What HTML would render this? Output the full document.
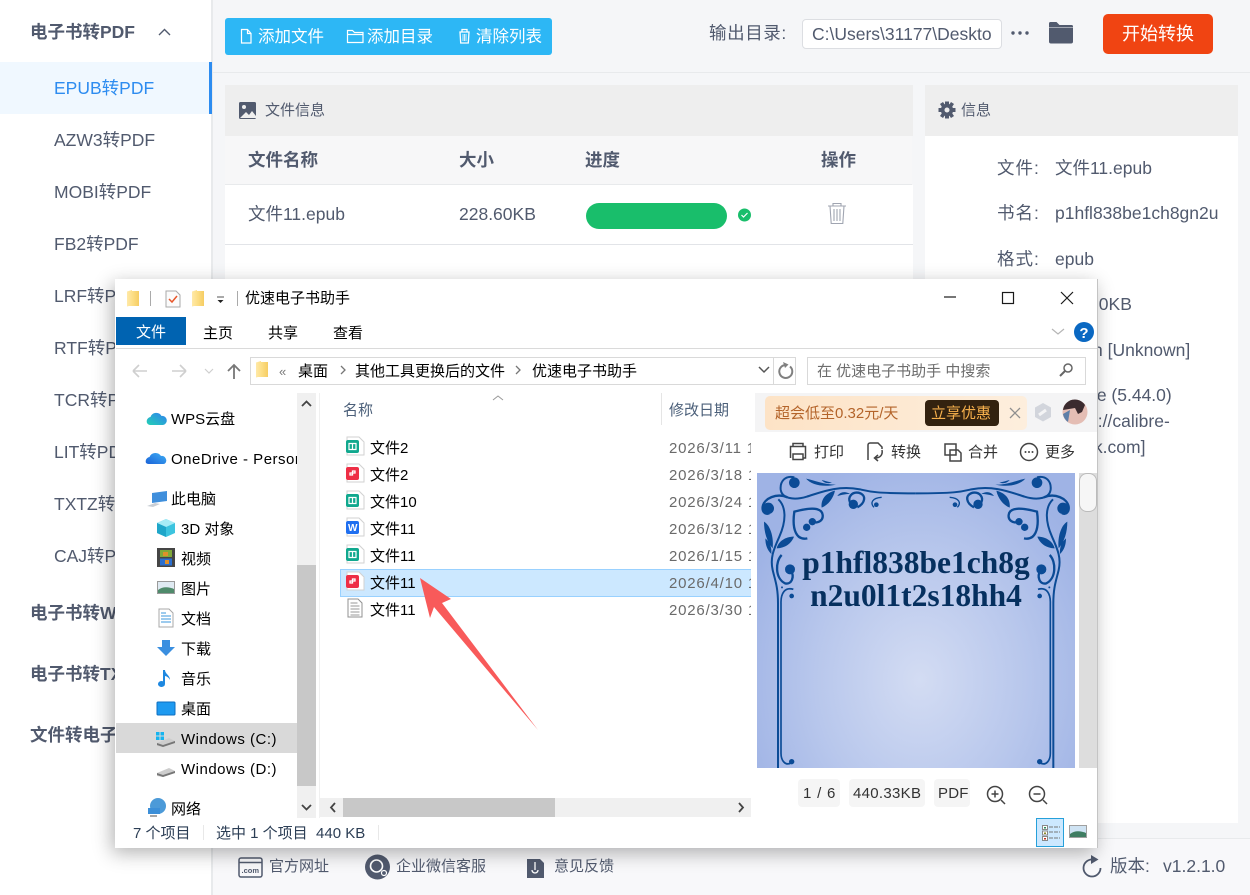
<!DOCTYPE html>
<html lang="zh"><head><meta charset="utf-8"><title>优速电子书助手</title>
<style>
html,body{margin:0;padding:0;width:1250px;height:895px;overflow:hidden;background:#f5f6f8}
body{position:relative;font-family:"Liberation Sans","Noto Sans CJK SC",sans-serif;color:#515a6e}
.a{position:absolute}
.t{position:absolute;white-space:nowrap;line-height:20px;font-size:17.5px}
.b{font-weight:700}
.w .t{font-size:15px;color:#000}
.w .t.d{color:#6a6a6a;letter-spacing:.8px}
.n{letter-spacing:.5px}
svg{position:absolute;left:0;top:0;overflow:visible}
</style></head><body>
<!-- sidebar -->
<div class="a" style="left:0;top:0;width:211px;height:895px;background:#fff"></div>
<div class="a" style="left:211px;top:0;width:2px;height:895px;background:#e8eaec"></div>
<div class="a" style="left:0;top:62px;width:209px;height:52px;background:#f0f8ff"></div>
<div class="a" style="left:209px;top:62px;width:3px;height:52px;background:#2d8cf0"></div>
<div class="t b" style="left:30px;top:22px">电子书转PDF</div>
<div class="t" style="left:54px;top:78px;color:#2d8cf0">EPUB转PDF</div>
<div class="t" style="left:54px;top:130px">AZW3转PDF</div>
<div class="t" style="left:54px;top:182px">MOBI转PDF</div>
<div class="t" style="left:54px;top:234px">FB2转PDF</div>
<div class="t" style="left:54px;top:286px">LRF转PDF</div>
<div class="t" style="left:54px;top:338px">RTF转PDF</div>
<div class="t" style="left:54px;top:390px">TCR转PDF</div>
<div class="t" style="left:54px;top:442px">LIT转PDF</div>
<div class="t" style="left:54px;top:494px">TXTZ转PDF</div>
<div class="t" style="left:54px;top:546px">CAJ转PDF</div>
<div class="t b" style="left:30px;top:603px">电子书转WORD</div>
<div class="t b" style="left:30px;top:664px">电子书转TXT</div>
<div class="t b" style="left:30px;top:725px">文件转电子书</div>

<!-- top bar -->
<div class="a" style="left:213px;top:72px;width:1037px;height:1px;background:#e8eaec"></div>
<div class="a" style="left:225px;top:18px;width:327px;height:37px;background:#2db7f5;border-radius:3px"></div>
<div class="t" style="left:258px;top:27px;color:#fff;font-size:16.5px">添加文件</div>
<div class="t" style="left:367px;top:27px;color:#fff;font-size:16.5px">添加目录</div>
<div class="t" style="left:476px;top:27px;color:#fff;font-size:16.5px">清除列表</div>
<div class="t" style="left:709px;top:23px;letter-spacing:.6px">输出目录:</div>
<div class="a" style="left:802px;top:19px;width:198px;height:28px;background:#fff;border:1px solid #dcdee2;border-radius:4px"></div>
<div class="t" style="left:812px;top:24px;font-size:17.5px;width:180px;overflow:hidden">C:\Users\31177\Desktop</div>
<div class="a" style="left:1103px;top:14px;width:110px;height:40px;background:#f04412;border-radius:5px"></div>
<div class="t" style="left:1122px;top:24px;color:#fff;font-size:18px">开始转换</div>

<!-- file panel -->
<div class="a" style="left:225px;top:85px;width:688px;height:51px;background:#eee"></div>
<div class="a" style="left:225px;top:136px;width:687px;height:48px;background:#f7f7f8"></div>
<div class="a" style="left:225px;top:184px;width:687px;height:1px;background:#e8eaec"></div>
<div class="a" style="left:225px;top:185px;width:688px;height:638px;background:#fff"></div>
<div class="a" style="left:225px;top:244px;width:688px;height:1px;background:#e2e4e8"></div>
<div class="t" style="left:265px;top:101px;font-size:15px">文件信息</div>
<div class="t b" style="left:248px;top:150px">文件名称</div>
<div class="t b" style="left:459px;top:150px">大小</div>
<div class="t b" style="left:585px;top:150px">进度</div>
<div class="t b" style="left:821px;top:150px">操作</div>
<div class="t" style="left:248px;top:204px">文件11.epub</div>
<div class="t" style="left:459px;top:204px">228.60KB</div>
<div class="a" style="left:586px;top:203px;width:141px;height:26px;background:#19be6b;border-radius:13px"></div>

<!-- info panel -->
<div class="a" style="left:925px;top:85px;width:313px;height:51px;background:#eee"></div>
<div class="a" style="left:925px;top:136px;width:313px;height:687px;background:#fff"></div>
<div class="t" style="left:961px;top:101px;font-size:15px">信息</div>
<div class="t" style="left:997px;top:158px;letter-spacing:1px">文件:</div><div class="t" style="left:1055px;top:158px">文件11.epub</div>
<div class="t" style="left:997px;top:203px;letter-spacing:1px">书名:</div><div class="t" style="left:1055px;top:203px;width:163px;overflow:hidden">p1hfl838be1ch8gn2u0l1t2s18hh4</div>
<div class="t" style="left:997px;top:249px;letter-spacing:1px">格式:</div><div class="t" style="left:1055px;top:249px">epub</div>
<div class="t" style="left:997px;top:294px;letter-spacing:1px">大小:</div><div class="t" style="left:1055px;top:294px">228.60KB</div>
<div class="t" style="left:1093px;top:340px">n [Unknown]</div>
<div class="t" style="left:1055px;top:385px">calibre (5.44.0)</div>
<div class="t" style="left:1055px;top:411px">[https://calibre-</div>
<div class="t" style="left:1055px;top:437px">ebook.com]</div>

<!-- footer -->
<div class="a" style="left:213px;top:838px;width:1037px;height:57px;background:#f8f8fa;border-top:1px solid #e8eaec;box-sizing:border-box"></div>
<div class="t" style="left:269px;top:857px;font-size:15px">官方网址</div>
<div class="t" style="left:396px;top:857px;font-size:15px">企业微信客服</div>
<div class="t" style="left:554px;top:857px;font-size:15px">意见反馈</div>
<div class="t" style="left:1110px;top:856px">版本:</div>
<div class="t" style="left:1163px;top:856px">v1.2.1.0</div>

<!-- background icons -->
<svg width="1250" height="895" viewBox="0 0 1250 895">
<path d="M159 35l5.500-5.500 5.500 5.500" fill="none" stroke="#515a6e" stroke-width="1.400"/>
<g fill="none" stroke="#fff" stroke-width="1.200">
<path d="M241.500 29.500h6l3.500 4v9.500h-9.500zM247.500 29.500v4h3.500"/>
<path d="M347.500 30.500h5l2 2h8.500v10h-15.500zM347.500 34.500h15.500"/>
</g>
<path d="M460 32h9l-.7 11h-7.600zM462 29.500h5v2.500h-5z" fill="none" stroke="#fff" stroke-width="1.300"/>
<path d="M463 34v7M464.500 34v7M466 34v7" stroke="#fff" stroke-width=".8"/>
<g fill="#515a6e"><circle cx="1013" cy="33" r="1.700"/><circle cx="1020" cy="33" r="1.700"/><circle cx="1027" cy="33" r="1.700"/>
<path d="M1049 23.500a1.500 1.500 0 0 1 1.500-1.500h6l3 3h12a1.500 1.500 0 0 1 1.500 1.500v1h-24z"/><path d="M1049 28h24v13.500a2 2 0 0 1-2 2h-20a2 2 0 0 1-2-2z"/></g>
<g><rect x="239" y="102" width="17" height="17" rx="1.500" fill="#515a6e"/><circle cx="244" cy="107" r="2" fill="#eee"/><path d="M240 118l6-6 3 3 3-4 4 5v2h-16z" fill="#eee"/></g>
<g fill="#515a6e"><circle cx="947" cy="110" r="6.200"/><circle cx="947" cy="110" r="2.500" fill="#eee"/>
<path d="M945 101.500h4v3h-4zM945 115.500h4v3h-4zM938.500 108h3v4h-3zM952.500 108h3v4h-3z"/><path d="M940 104l3-2 2 3-3 2zM951 102l3 2-2 3-3-2zM940 116l3 2 2-3-3-2zM954 116l-3 2-2-3 3-2z"/></g>
<circle cx="744.500" cy="215" r="6.500" fill="#19be6b"/><path d="M741.500 215l2 2 4-4" fill="none" stroke="#fff" stroke-width="1.200"/>
<g fill="none" stroke="#a0a5b1" stroke-width="1.100"><path d="M828 206h18M833 206v-2.500h8v2.500M830 206l1.200 17.500h11.600l1.200-17.500M834 209v12M837 209v12M840 209v12"/></g>
<g fill="none" stroke="#515a6e" stroke-width="1.500"><path d="M239 860a2 2 0 0 1 2-2h19a2 2 0 0 1 2 2v15a2 2 0 0 1-2 2h-19a2 2 0 0 1-2-2zM239 862.500h23"/></g>
<text x="241.500" y="873" font-size="7.500" font-weight="700" fill="#515a6e" font-family="Liberation Sans">.com</text>
<circle cx="377.500" cy="867" r="12.500" fill="#515a6e"/><circle cx="376.500" cy="866" r="6" fill="none" stroke="#fff" stroke-width="1.600"/><circle cx="384" cy="873" r="2.500" fill="none" stroke="#fff" stroke-width="1.200"/>
<path d="M527 859h13l4 4v15h-17z" fill="#515a6e"/><path d="M535 862v8M532 870a3 3 0 1 0 6 0" fill="none" stroke="#fff" stroke-width="1.300"/>
<path d="M1092 859.500A8.500 8.500 0 1 0 1100.500 868" fill="none" stroke="#515a6e" stroke-width="1.800"/><path d="M1091 855l7.500 4.500-7.500 4.500z" fill="#515a6e"/>
</svg>

<!-- explorer window -->
<div class="a w" style="left:115px;top:279px;width:983px;height:569px;background:#fff;box-shadow:-3px 5px 18px rgba(0,0,0,.3)">
</div>
<div class="a" style="left:1097px;top:279px;width:1px;height:569px;background:#c4c4c4"></div>
<div class="w">
<div class="t" style="left:245px;top:289px">优速电子书助手</div>
<div class="a" style="left:116px;top:317px;width:70px;height:28px;background:#0063b1"></div>
<div class="t" style="left:136px;top:323px;color:#fff">文件</div>
<div class="t" style="left:203px;top:324px">主页</div>
<div class="t" style="left:268px;top:324px">共享</div>
<div class="t" style="left:333px;top:324px">查看</div>
<div class="a" style="left:116px;top:348px;width:981px;height:1px;background:#dadada"></div>
<div class="a" style="left:250px;top:357px;width:544px;height:26px;border:1px solid #d9d9d9"></div>
<div class="a" style="left:773px;top:357px;width:1px;height:27px;background:#d9d9d9"></div>
<div class="a" style="left:807px;top:357px;width:277px;height:26px;border:1px solid #d9d9d9"></div>
<div class="t" style="left:279px;top:362px;color:#777;font-size:13px">«</div>
<div class="t" style="left:298px;top:362px">桌面</div>
<div class="t" style="left:355px;top:362px">其他工具更换后的文件</div>
<div class="t" style="left:532px;top:362px">优速电子书助手</div>
<div class="t" style="left:817px;top:362px;color:#6d6d6d">在 优速电子书助手 中搜索</div>

<!-- nav pane -->
<div class="a" style="left:116px;top:723px;width:181px;height:30px;background:#d9d9d9"></div>
<div class="a" style="left:297px;top:393px;width:19px;height:425px;background:#f0f0f0"></div>
<div class="a" style="left:297px;top:565px;width:19px;height:221px;background:#c8c8c8"></div>
<div class="t" style="left:171px;top:410px">WPS云盘</div>
<div class="t n" style="left:171px;top:450px;width:126px;overflow:hidden">OneDrive - Personal</div>
<div class="t" style="left:171px;top:490px">此电脑</div>
<div class="t" style="left:181px;top:520px">3D 对象</div>
<div class="t" style="left:181px;top:550px">视频</div>
<div class="t" style="left:181px;top:580px">图片</div>
<div class="t" style="left:181px;top:610px">文档</div>
<div class="t" style="left:181px;top:640px">下载</div>
<div class="t" style="left:181px;top:670px">音乐</div>
<div class="t" style="left:181px;top:700px">桌面</div>
<div class="t n" style="left:181px;top:730px">Windows (C:)</div>
<div class="t n" style="left:181px;top:760px">Windows (D:)</div>
<div class="t" style="left:171px;top:800px">网络</div>

<!-- list -->
<div class="a" style="left:319px;top:393px;width:1px;height:425px;background:#f0f0f0"></div>
<div class="t" style="left:343px;top:401px;color:#4c607a">名称</div>
<div class="a" style="left:661px;top:393px;width:1px;height:32px;background:#e5e5e5"></div>
<div class="t" style="left:669px;top:401px;color:#4c607a">修改日期</div>
<div class="a" style="left:340px;top:569px;width:410px;height:26px;background:#cce8ff;border:1px solid #99d1ff;border-right:0"></div>
<div class="t" style="left:370px;top:439px">文件2</div><div class="t d" style="left:669px;top:439px;width:82px;overflow:hidden">2026/3/11 11:20</div>
<div class="t" style="left:370px;top:466px">文件2</div><div class="t d" style="left:669px;top:466px;width:82px;overflow:hidden">2026/3/18 11:20</div>
<div class="t" style="left:370px;top:493px">文件10</div><div class="t d" style="left:669px;top:493px;width:82px;overflow:hidden">2026/3/24 11:20</div>
<div class="t" style="left:370px;top:520px">文件11</div><div class="t d" style="left:669px;top:520px;width:82px;overflow:hidden">2026/3/12 11:20</div>
<div class="t" style="left:370px;top:547px">文件11</div><div class="t d" style="left:669px;top:547px;width:82px;overflow:hidden">2026/1/15 11:20</div>
<div class="t" style="left:370px;top:574px">文件11</div><div class="t d" style="left:669px;top:574px;width:82px;overflow:hidden">2026/4/10 11:20</div>
<div class="t" style="left:370px;top:601px">文件11</div><div class="t d" style="left:669px;top:601px;width:82px;overflow:hidden">2026/3/30 11:20</div>
<div class="a" style="left:320px;top:798px;width:431px;height:19px;background:#f0f0f0"></div>
<div class="a" style="left:343px;top:798px;width:212px;height:19px;background:#c8c8c8"></div>

<!-- status -->
<div class="t" style="left:133px;top:824px;color:#2c3e55">7 个项目</div>
<div class="a" style="left:203px;top:825px;width:1px;height:15px;background:#e8e8e8"></div>
<div class="t" style="left:216px;top:824px;color:#2c3e55">选中 1 个项目&nbsp; 440 KB</div>
<div class="a" style="left:378px;top:825px;width:1px;height:15px;background:#e8e8e8"></div>
<div class="a" style="left:1036px;top:818px;width:26px;height:27px;background:#cce8ff;border:1px solid #26a0da"></div>

<!-- preview -->
<div class="a" style="left:755px;top:393px;width:342px;height:39px;background:#f4f4f5"></div>
<div class="a" style="left:765px;top:396px;width:262px;height:34px;background:linear-gradient(90deg,#fde3c6,#fdeedd);border-radius:5px"></div>
<div class="t" style="left:775px;top:404px;color:#b4642a">超会低至0.32元/天</div>
<div class="a" style="left:925px;top:400px;width:74px;height:26px;background:#33220f;border-radius:4px"></div>
<div class="t" style="left:931px;top:404px;color:#f6b04c">立享优惠</div>
<div class="t" style="left:814px;top:443px;color:#333">打印</div>
<div class="t" style="left:891px;top:443px;color:#333">转换</div>
<div class="t" style="left:968px;top:443px;color:#333">合并</div>
<div class="t" style="left:1045px;top:443px;color:#333">更多</div>
<div class="a" style="left:757px;top:473px;width:318px;height:295px;background:radial-gradient(ellipse 190px 230px at 163px 207px,#d3dcf3 0%,#b8c7ec 55%,#9fb3e5 100%);overflow:hidden">
<svg style="left:-7px;top:-3px" width="350" height="310" viewBox="0 0 1050 930">
<defs><g id="orn" fill="none" stroke="#0b4b96" stroke-width="7">
<path d="M133 22C105 15 90 35 92 58 95 85 130 92 170 80 210 68 260 45 330 58 360 65 375 70 497 70" stroke-width="6"/>
<circle cx="133" cy="38" r="16" fill="#0b4b96" stroke="none"/>
<path d="M168 26C190 30 225 45 258 44 222 52 185 46 168 26ZM215 30C225 32 235 36 246 38 232 42 222 38 215 30ZM215 113C212 90 225 70 255 62 250 85 235 105 215 113ZM262 78C270 66 285 62 300 72 285 72 275 75 262 78Z" fill="#0b4b96" stroke="none"/>
<path d="M322 112C345 100 352 75 325 68 305 65 293 82 300 97"/>
<circle cx="310" cy="103" r="14" fill="#0b4b96" stroke="none"/>
<path d="M372 112C360 100 365 84 395 82" stroke-width="4"/><circle cx="379" cy="104" r="7" fill="#0b4b96" stroke="none"/>
<path d="M112 82C80 68 42 85 38 110 36 125 45 135 58 130"/>
<circle cx="55" cy="115" r="17" fill="#0b4b96" stroke="none"/>
<path d="M85 88C108 110 110 150 88 200 70 240 60 265 68 300 75 330 84 350 84 400L84 930" stroke-width="6"/>
<path d="M172 205C140 212 125 180 133 125 170 115 215 108 218 135 220 150 205 162 190 155"/>
<circle cx="187" cy="155" r="11" fill="#0b4b96" stroke="none"/><circle cx="170" cy="172" r="11" fill="#0b4b96" stroke="none"/>
<path d="M80 235C85 215 105 200 132 200 125 220 105 235 80 235ZM42 155C60 165 72 200 68 235 50 215 42 185 42 155ZM46 205C58 215 66 230 64 252 52 240 46 225 46 205Z" fill="#0b4b96" stroke="none"/>
<path d="M95 255C75 275 75 325 105 340 125 345 135 320 122 300"/>
<circle cx="120" cy="298" r="15" fill="#0b4b96" stroke="none"/>
<path d="M130 358C105 350 92 370 93 400L93 850C93 870 105 890 125 878" stroke-width="5"/>
<circle cx="125" cy="378" r="7" fill="#0b4b96" stroke="none"/><circle cx="125" cy="875" r="8" fill="#0b4b96" stroke="none"/><circle cx="96" cy="352" r="3" fill="#0b4b96" stroke="none"/>
</g></defs>
<use href="#orn"/><use href="#orn" transform="translate(994 0) scale(-1 1)"/>
</svg>
<div class="a" style="left:0;top:73px;width:318px;text-align:center;font:700 31.5px/33px 'Liberation Serif',serif;color:#06305f">p1hfl838be1ch8g<br>n2u0l1t2s18hh4</div>
</div>
<div class="a" style="left:1079px;top:473px;width:18px;height:295px;background:#ddd"></div>
<div class="a" style="left:1079px;top:473px;width:18px;height:39px;background:#f6f6f6;border:1px solid #bbb;border-radius:8px;box-sizing:border-box"></div>
<div class="a" style="left:798px;top:779px;width:42px;height:28px;background:#f5f5f5;border-radius:4px"></div>
<div class="a" style="left:849px;top:779px;width:76px;height:28px;background:#f5f5f5;border-radius:4px"></div>
<div class="a" style="left:934px;top:779px;width:36px;height:28px;background:#f5f5f5;border-radius:4px"></div>
<div class="t" style="left:803px;top:784px;color:#333;letter-spacing:.8px">1 / 6</div>
<div class="t" style="left:853px;top:784px;color:#333;letter-spacing:.3px">440.33KB</div>
<div class="t" style="left:938px;top:784px;color:#333;letter-spacing:.2px">PDF</div>
</div>

<!-- window icons -->
<svg width="1250" height="895" viewBox="0 0 1250 895">
<defs>
<linearGradient id="fo" x1="0" x2="1" y1="0" y2="0"><stop offset="0" stop-color="#ffe9a8"/><stop offset=".4" stop-color="#fde08a"/><stop offset="1" stop-color="#f6cd63"/></linearGradient>
<linearGradient id="wc" x1="0" x2="1" y1="1" y2="0"><stop offset="0" stop-color="#23d0b5"/><stop offset="1" stop-color="#2f7ff0"/></linearGradient>
<linearGradient id="od" x1="0" x2="1" y1="1" y2="0"><stop offset="0" stop-color="#1a62d8"/><stop offset="1" stop-color="#3fb0f5"/></linearGradient>
<g id="pg"><path d="M0 0h12l5 5v13H0z" transform="translate(1 0)" fill="#fff" stroke="#d2d2d2"/></g>
<g id="fg"><use href="#pg"/><rect x="0" y="3" width="13" height="13" rx="2" fill="#10a88e"/><path d="M3 6.500h7v6H3zM6.500 6.500v6" fill="none" stroke="#fff" stroke-width="1.200"/></g>
<g id="fr"><use href="#pg"/><rect x="0" y="3" width="13" height="13" rx="2" fill="#ee2e45"/><path d="M4 11h2.500v-2H4zM6.500 9h2.500V7H6.500z" fill="none" stroke="#fff" stroke-width="1.300"/></g>
<g id="fb"><use href="#pg"/><rect x="0" y="3" width="13" height="13" rx="2" fill="#1f6ff0"/><text x="2" y="13" font-size="10" font-weight="700" fill="#fff" font-family="Liberation Sans">W</text></g>
<path id="fd" d="M0 1.500l5-1.500v1l7 0v15H2l-2 .500z" fill="url(#fo)"/>
</defs>
<use href="#fd" x="127" y="290"/><use href="#fd" x="192" y="290"/>
<path d="M150.500 291v15M237.500 291v15" stroke="#aaa"/>
<path d="M166 291h10l4 4v12h-14z" fill="#fbfbfb" stroke="#a9a9a9"/><path d="M169 299l3 3 5-6" fill="none" stroke="#e8562a" stroke-width="1.500"/>
<path d="M217 297h7" stroke="#555"/><path d="M217.500 300h6l-3 3z" fill="#222"/>
<path d="M944 297h12" stroke="#1a1a1a" stroke-width="1.200"/><rect x="1002.500" y="292.500" width="11" height="11" fill="none" stroke="#1a1a1a" stroke-width="1.200"/><path d="M1061 292l12 12M1073 292l-12 12" stroke="#1a1a1a" stroke-width="1.200"/>
<path d="M1052 329l6 5 6-5" fill="none" stroke="#b5b5b5" stroke-width="1.200"/>
<circle cx="1084" cy="332" r="10" fill="#0a68c2"/><text x="1084" y="338" text-anchor="middle" font-size="15" font-weight="700" fill="#fff" font-family="Liberation Sans">?</text>
<g fill="none" stroke="#cfcfcf" stroke-width="1.600"><path d="M133 371h14M133 371l6-6M133 371l6 6M186 371h-14M186 371l-6-6M186 371l-6 6"/><path d="M205 369l4 4 4-4" stroke-width="1.200"/></g>
<path d="M234 379v-14M228 371l6-6 6 6" fill="none" stroke="#777" stroke-width="1.800"/>
<use href="#fd" x="256" y="361"/>
<path d="M341 366l4 4-4 4M516 366l4 4-4 4" fill="none" stroke="#777" stroke-width="1.300"/>
<path d="M759 367l5 5 5-5" fill="none" stroke="#555" stroke-width="1.500"/>
<path d="M790 366.500a6.500 6.500 0 1 1-3.500-1.500" fill="none" stroke="#808080" stroke-width="2"/><path d="M783 362l5.500 2.500-3.500 3.500z" fill="#808080"/>
<circle cx="1068" cy="368" r="4" fill="none" stroke="#666" stroke-width="1.500"/><path d="M1065 371l-5 5" stroke="#666" stroke-width="2"/>
<path d="M493 400l5-4 5 4" fill="none" stroke="#999"/>
<path d="M302 406l4.500-4.500 4.500 4.500M302 805l4.500 4.500 4.500-4.500" fill="none" stroke="#444" stroke-width="1.800"/>
<path d="M335 803l-4 4.500 4 4.500M739 803l4 4.500-4 4.500" fill="none" stroke="#444" stroke-width="1.800"/>

<path d="M147 423a4.500 4.500 0 0 1 3.500-6 6 6 0 0 1 11-1 4.500 4.500 0 0 1 1.500 9h-13a4 4 0 0 1-3-2z" fill="url(#wc)"/>
<path d="M146 463a4.500 4.500 0 0 1 3.500-6 6.500 6.500 0 0 1 11.500-1 4.500 4.500 0 0 1 4 7.500 3 3 0 0 1-2 .500h-14a4 4 0 0 1-3-1z" fill="url(#od)"/>
<path d="M152 493l15-2v10l-15 2z" fill="#3f8fdc"/><path d="M147 506l8-3 5 1-7 3z" fill="#c9ced4"/>
<path d="M166 519l9 4v10l-9 4-9-4v-10z" fill="#3cc4df"/><path d="M166 527l9-4-9-4-9 4z" fill="#a7ecf6"/><path d="M166 527v10l-9-4v-10z" fill="#1fa6c9"/>
<rect x="157" y="548" width="18" height="19" fill="#454545"/><rect x="160" y="550" width="12" height="7" fill="#7fa83a"/><rect x="160" y="558.500" width="12" height="7" fill="#2a6fd0"/><path d="M163 552h5v4h-5zM165 560h4v4h-4z" fill="#e0902a"/>
<rect x="157.500" y="581.500" width="17" height="12" fill="#dfeaf2" stroke="#9a9a9a"/><path d="M158 590c5-4 11-3 16-1v4h-16z" fill="#4f8a6b"/>
<path d="M159 609h10l4 4v14h-14z" fill="#fff" stroke="#a8a8a8"/><path d="M161 613h5M161 616h10M161 619h10M161 622h10" stroke="#3b97de"/>
<path d="M162 640h8v7h5l-9 9-9-9h5z" fill="#3a8fe0"/>
<path d="M165 670v14a3.500 3 0 1 1-2-2.700V670h2c0 4 5 5 5 10-1-2-2.500-3.500-5-4" fill="#1e88e0"/>
<rect x="157" y="702" width="18" height="13" rx="1" fill="#1e9af0" stroke="#0e6fc0"/>
<path d="M157 743l12-5 6 3v2l-12 4-6-1z" fill="#cdcdcd"/><path d="M157 743v2l6 2 12-4v-2l-12 4z" fill="#777"/>
<g fill="#16b4ef"><rect x="156" y="732" width="3.500" height="3.500"/><rect x="160.500" y="732" width="3.500" height="3.500"/><rect x="156" y="736.500" width="3.500" height="3.500"/><rect x="160.500" y="736.500" width="3.500" height="3.500"/></g>
<path d="M157 773l12-5 6 3v2l-12 4-6-1z" fill="#cdcdcd"/><path d="M157 773v2l6 2 12-4v-2l-12 4z" fill="#777"/>
<circle cx="158" cy="806" r="8" fill="#4c9ad8"/><path d="M148 808h12v6h-12z" fill="#3c8fd8"/><path d="M150 816h7" stroke="#888" stroke-width="1.500"/>

<use href="#fg" x="346" y="437"/><use href="#fr" x="346" y="464"/><use href="#fg" x="346" y="491"/><use href="#fb" x="346" y="518"/><use href="#fg" x="346" y="545"/><use href="#fr" x="346" y="572"/>
<path d="M348 599h10l4 4v14h-14z" fill="#fff" stroke="#909090"/><path d="M350.500 603h7M350.500 606h9M350.500 609h9M350.500 612h9M350.500 615h9" stroke="#9a9a9a"/>

<path d="M1010 408l10 10M1020 408l-10 10" stroke="#8f8f8f" stroke-width="1.300"/>
<path d="M1043 403l8 4.500v9.500l-8 4.500-8-4.500v-9.500z" fill="#d2d5dc"/><path d="M1039 415l7-5" stroke="#f4f4f5" stroke-width="3"/>
<circle cx="1075" cy="412" r="12.500" fill="#e4bdb4"/><path d="M1063 410a12 12 0 0 1 22-5l-3 7-4 2-3-6z" fill="#3b2b2f"/><path d="M1063 414a12 12 0 0 0 5 8l2-12z" fill="#5d7fa8"/>

<g fill="none" stroke="#444" stroke-width="1.500">
<path d="M793 447v-3.500h10v3.500M790.500 458v-11.500h15v11.500h-2M793 454h10v5.500h-10z"/>
<path d="M868 460V445a2 2 0 0 1 2-2h8l4 4v2M882 450c1 5-2 8-7 8M878 455l-3.500 3 3.500 3"/>
<path d="M945 444h11v11h-11zM950 450h8l3 3v8h-11z"/>
<circle cx="1029" cy="452" r="8.500"/></g>
<g fill="#444"><circle cx="1025.500" cy="452" r="1"/><circle cx="1029" cy="452" r="1"/><circle cx="1032.500" cy="452" r="1"/></g>
<g fill="none" stroke="#444" stroke-width="1.500"><circle cx="995" cy="794" r="7.500"/><path d="M1001 800l4 4M995 790.500v7M991.500 794h7"/><circle cx="1037" cy="794" r="7.500"/><path d="M1043 800l4 4M1033.500 794h7"/></g>

<g><rect x="1042.500" y="825.500" width="5" height="4" fill="#fff" stroke="#888"/><rect x="1042.500" y="831" width="5" height="4" fill="#fff" stroke="#888"/><rect x="1042.500" y="836.500" width="5" height="4" fill="#fff" stroke="#888"/><rect x="1044" y="827" width="2" height="1.500" fill="#2a8a5a"/><rect x="1044" y="832.500" width="2" height="1.500" fill="#8a8a2a"/><rect x="1044" y="838" width="2" height="1.500" fill="#c03020"/><path d="M1049 827h11M1049 832h11M1049 838h11" stroke="#777" stroke-dasharray="4 1"/></g>
<rect x="1069.500" y="825.500" width="17" height="12" fill="#cfe3f3" stroke="#a0a0a0"/><path d="M1070 834c5-4 11-3 16-1v4h-16z" fill="#3f7d62"/>

<path d="M420 578L451 599 442 603 538 730 434 607 430 618Z" fill="#f85a5a"/>
</svg>
</body></html>
